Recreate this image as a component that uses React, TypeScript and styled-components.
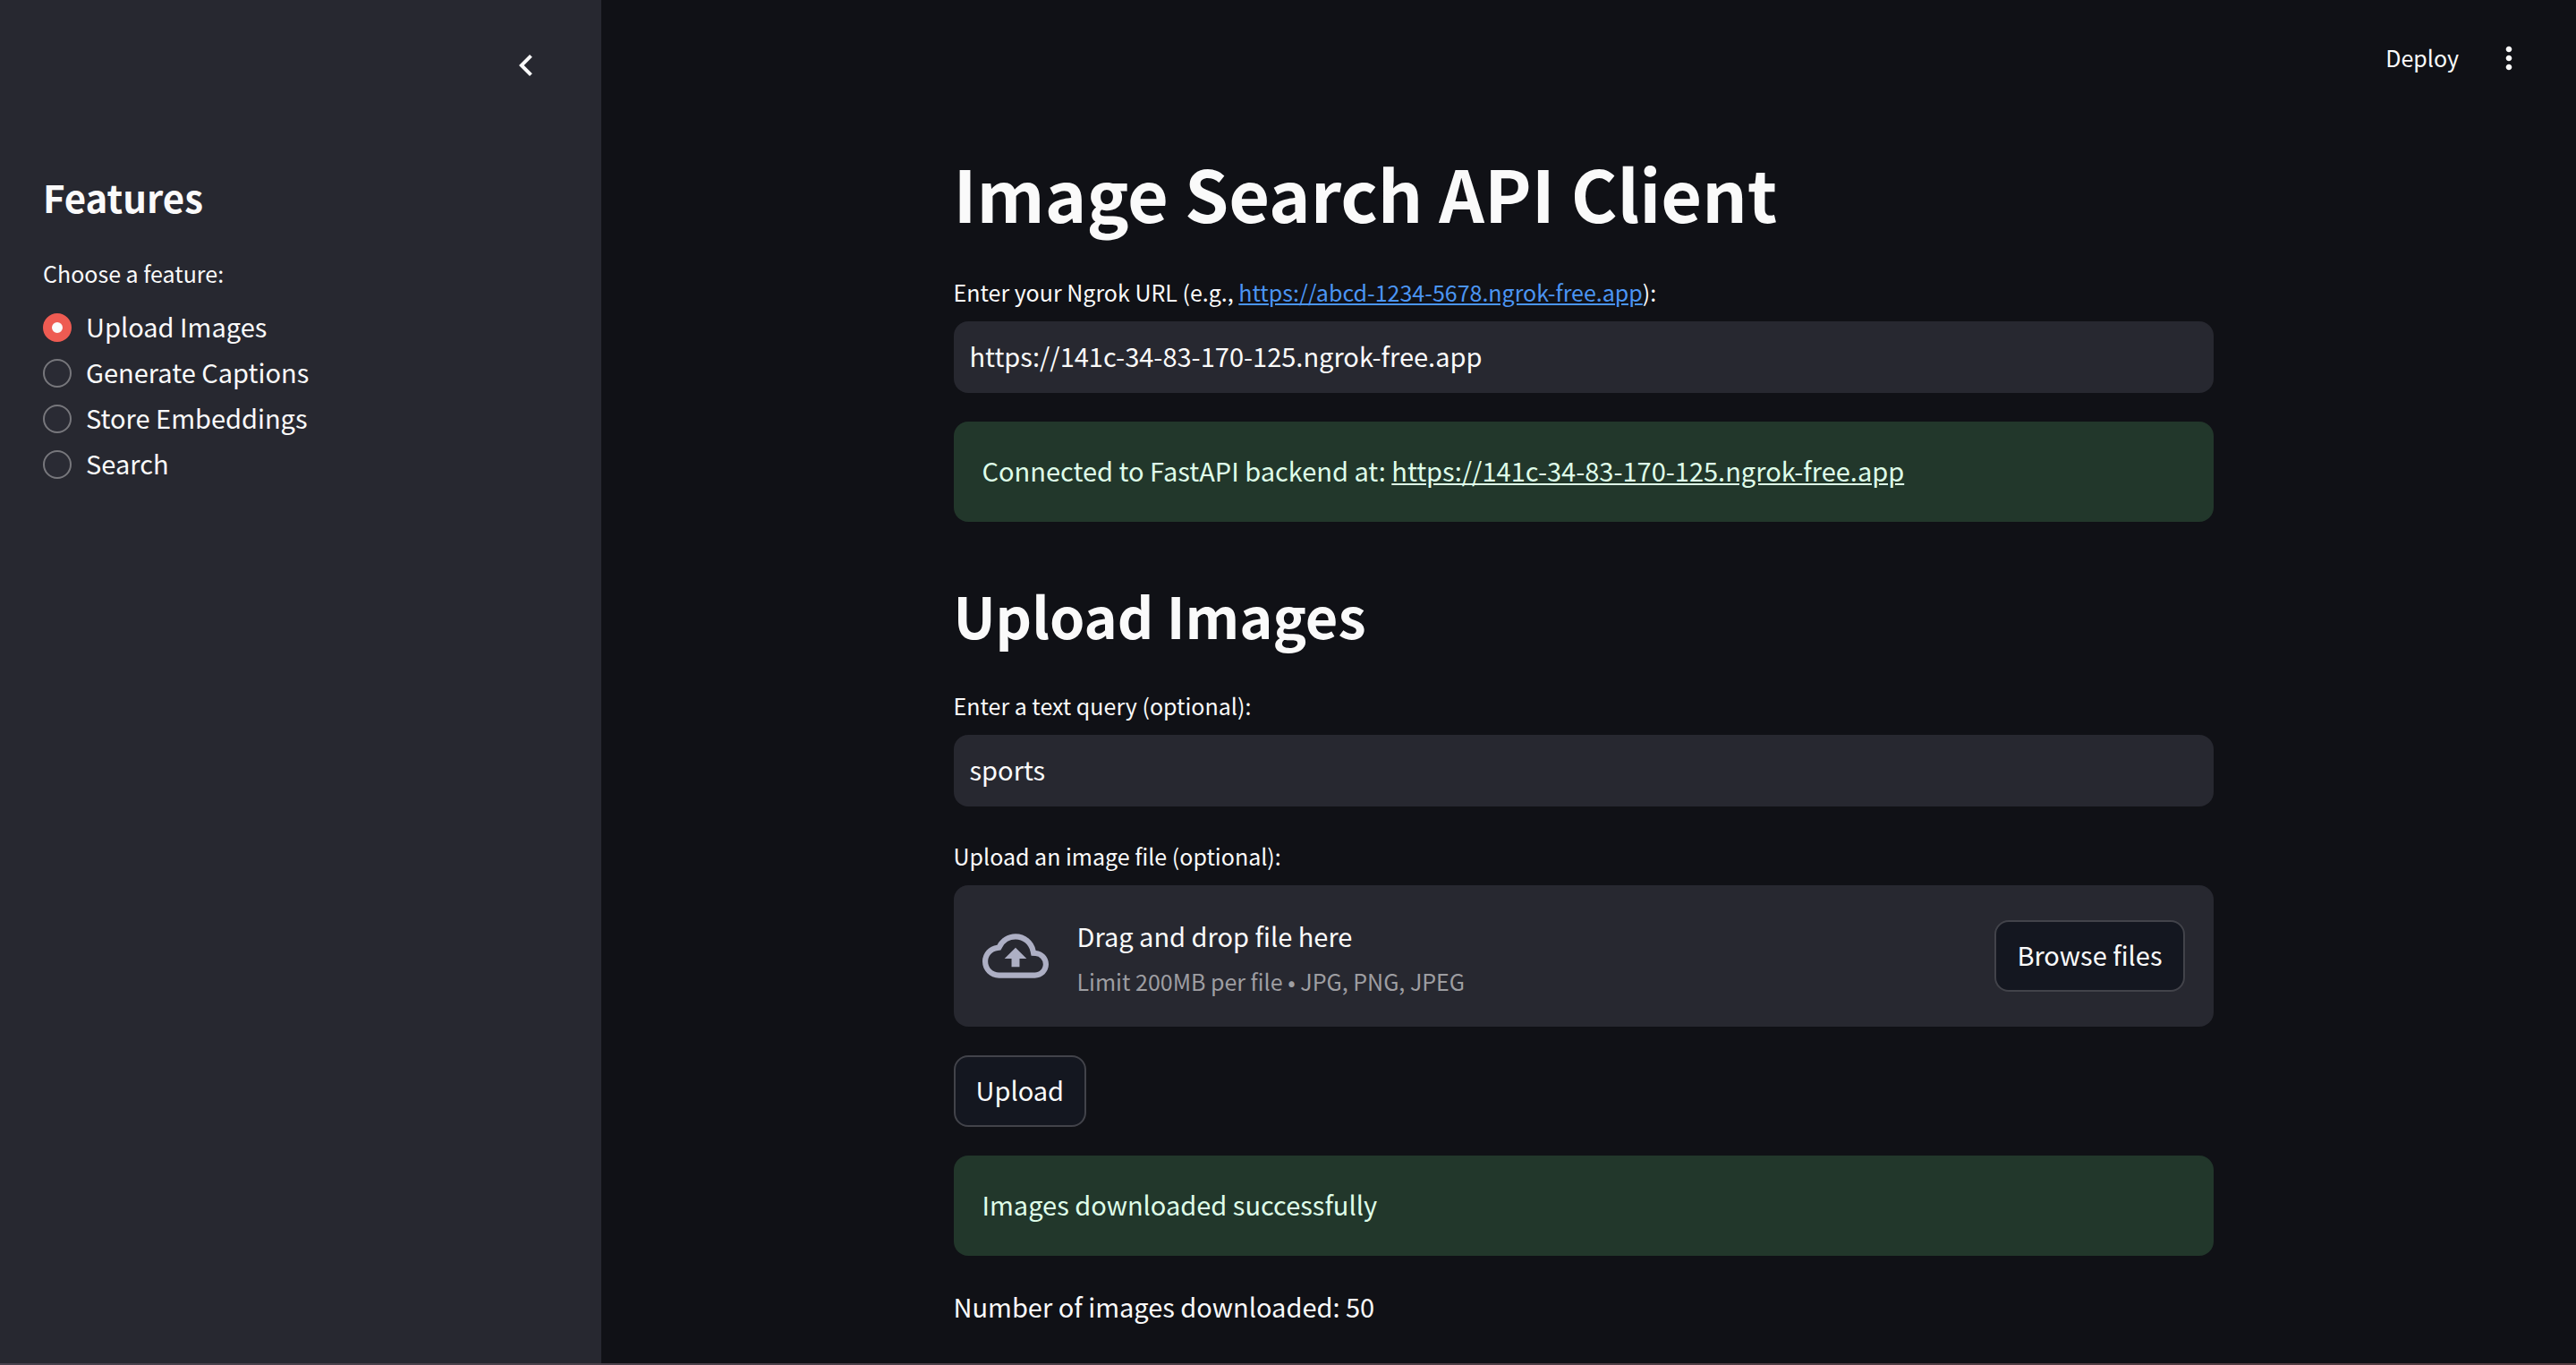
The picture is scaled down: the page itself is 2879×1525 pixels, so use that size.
import React, { useRef, useState } from "react";
import styled, { createGlobalStyle, css } from "styled-components";
import { MdChevronLeft, MdMoreVert, MdOutlineCloudUpload } from "react-icons/md";

const color = {
  page: "#101116",
  panel: "#272830",
  button: "#141720",
  text: "#fafafa",
  muted: "#9e9ea2",
  border: "#42434a",
  link: "#4b95f3",
  primary: "#ee5b52",
  successBg: "#22372b",
  successText: "#dffde9",
};

const GlobalStyle = createGlobalStyle`
  *, *::before, *::after { box-sizing: border-box; }
  body {
    margin: 0;
    background: ${color.page};
    color: ${color.text};
    font-family: "Noto Sans CJK JP", "Noto Sans", sans-serif;
    font-size: 29px;
    line-height: 48px;
  }
  button, input { font: inherit; color: inherit; }
  h1, h2, p, fieldset { margin: 0; padding: 0; border: 0; min-width: 0; }
`;

const Shell = styled.div`
  min-height: 100vh;
  display: flex;
  flex-direction: column;
`;

const Columns = styled.div`
  flex: 1;
  display: flex;
`;

const BottomEdge = styled.div`
  height: 2px;
  background: linear-gradient(90deg, #48424d, #553d42);
`;

const Sidebar = styled.aside`
  flex: 0 0 672px;
  background: ${color.panel};
  padding: 49px 48px 48px;
`;

const SidebarTop = styled.div`
  display: flex;
  justify-content: flex-end;
  padding: 0 12px;
  margin-bottom: 89px;
`;

const IconButton = styled.button`
  display: flex;
  align-items: center;
  justify-content: center;
  width: 48px;
  height: 48px;
  padding: 0;
  border: 0;
  background: none;
  cursor: pointer;
`;

const SidebarTitle = styled.h2`
  font-size: 42px;
  font-weight: 600;
  line-height: 68px;
  margin-bottom: 28px;
`;

const smallText = css`
  font-size: 25px;
  line-height: 46px;
`;

const RadioGroup = styled.fieldset`
  display: flex;
  flex-direction: column;
`;

const Legend = styled.legend`
  ${smallText}
  padding: 0;
  margin-bottom: 12px;
`;

const RadioRow = styled.label`
  display: flex;
  align-items: center;
  gap: 16px;
  height: 51px;
  cursor: pointer;

  span { padding-bottom: 4px; }
`;

const Radio = styled.input`
  appearance: none;
  width: 32px;
  height: 32px;
  margin: 0;
  border: 2px solid #77777c;
  border-radius: 50%;
  background: #2a2b34;

  &:checked {
    border: 10px solid ${color.primary};
    background: ${color.text};
  }
`;

const Main = styled.main`
  flex: 1;
  min-width: 0;
  display: flex;
  flex-direction: column;
`;

const Toolbar = styled.header`
  display: flex;
  align-items: center;
  justify-content: flex-end;
  gap: 32px;
  height: 130px;
  padding-right: 51px;
`;

const DeployButton = styled.button`
  ${smallText}
  padding: 0 0 2px;
  border: 0;
  background: none;
  cursor: pointer;
`;

const Scroller = styled.div`
  padding: 28px 12px 40px 0;
`;

const Content = styled.div`
  display: flex;
  flex-direction: column;
  gap: 32px;
  width: 100%;
  max-width: 1408px;
  margin: 0 auto;
`;

const Title = styled.h1`
  font-size: 79px;
  font-weight: 700;
  line-height: 113px;
`;

const SectionTitle = styled.h2`
  font-size: 63px;
  font-weight: 600;
  line-height: 92px;
  padding-top: 26px;
`;

const Field = styled.div`
  display: flex;
  flex-direction: column;
  gap: 10px;
`;

const FieldLabel = styled.label`
  ${smallText}
`;

const Link = styled.a<{ $inherit?: boolean }>`
  color: ${(p) => (p.$inherit ? "inherit" : color.link)};
  text-decoration: underline;
`;

const TextInput = styled.input`
  width: 100%;
  height: 80px;
  padding: 0 18px 4px;
  border: 0;
  border-radius: 16px;
  background: ${color.panel};
  outline: none;
`;

const Alert = styled.div`
  padding: 30px 32px 34px;
  border-radius: 16px;
  background: ${color.successBg};
  color: ${color.successText};
`;

const Dropzone = styled.section`
  display: flex;
  align-items: center;
  gap: 32px;
  min-height: 158px;
  padding: 24px 32px;
  border-radius: 16px;
  background: ${color.panel};

  svg { color: #adafc4; flex: none; }
`;

const DropText = styled.div`
  flex: 1;
  display: flex;
  flex-direction: column;
  gap: 4px;
  padding-top: 4px;
`;

const DropHint = styled.small`
  ${smallText}
  color: ${color.muted};
`;

const Button = styled.button<{ $start?: boolean }>`
  align-self: ${(p) => (p.$start ? "flex-start" : "center")};
  height: 80px;
  padding: 0 23px 4px;
  border: 2px solid ${color.border};
  border-radius: 16px;
  background: ${color.button};
  cursor: pointer;
`;

const features = ["Upload Images", "Generate Captions", "Store Embeddings", "Search"];

export default function App() {
  const [feature, setFeature] = useState(features[0]);
  const [url, setUrl] = useState("https://141c-34-83-170-125.ngrok-free.app");
  const [query, setQuery] = useState("sports");
  const fileRef = useRef<HTMLInputElement>(null);

  return (
    <>
      <GlobalStyle />
      <Shell>
        <Columns>
          <Sidebar>
            <SidebarTop>
              <IconButton type="button" aria-label="Collapse sidebar">
                <MdChevronLeft size={48} />
              </IconButton>
            </SidebarTop>
            <SidebarTitle>Features</SidebarTitle>
            <RadioGroup>
              <Legend>Choose a feature:</Legend>
              {features.map((name) => (
                <RadioRow key={name}>
                  <Radio
                    type="radio"
                    name="feature"
                    checked={feature === name}
                    onChange={() => setFeature(name)}
                  />
                  <span>{name}</span>
                </RadioRow>
              ))}
            </RadioGroup>
          </Sidebar>
          <Main>
            <Toolbar>
              <DeployButton type="button">Deploy</DeployButton>
              <IconButton type="button" aria-label="Main menu">
                <MdMoreVert size={40} />
              </IconButton>
            </Toolbar>
            <Scroller>
              <Content>
                <Title>Image Search API Client</Title>
                <Field>
                  <FieldLabel htmlFor="url">
                    Enter your Ngrok URL (e.g.,{" "}
                    <Link href="https://abcd-1234-5678.ngrok-free.app">
                      https://abcd-1234-5678.ngrok-free.app
                    </Link>
                    ):
                  </FieldLabel>
                  <TextInput id="url" type="text" value={url} onChange={(e) => setUrl(e.target.value)} />
                </Field>
                <Alert role="status">
                  Connected to FastAPI backend at:{" "}
                  <Link $inherit href="https://141c-34-83-170-125.ngrok-free.app">
                    https://141c-34-83-170-125.ngrok-free.app
                  </Link>
                </Alert>
                <SectionTitle>Upload Images</SectionTitle>
                <Field>
                  <FieldLabel htmlFor="query">Enter a text query (optional):</FieldLabel>
                  <TextInput id="query" type="text" value={query} onChange={(e) => setQuery(e.target.value)} />
                </Field>
                <Field>
                  <FieldLabel htmlFor="file">Upload an image file (optional):</FieldLabel>
                  <Dropzone>
                    <MdOutlineCloudUpload size={74} />
                    <DropText>
                      <span>Drag and drop file here</span>
                      <DropHint>Limit 200MB per file • JPG, PNG, JPEG</DropHint>
                    </DropText>
                    <input ref={fileRef} id="file" type="file" accept=".jpg,.png,.jpeg" hidden />
                    <Button type="button" onClick={() => fileRef.current?.click()}>
                      Browse files
                    </Button>
                  </Dropzone>
                </Field>
                <Button $start type="button">Upload</Button>
                <Alert role="status">Images downloaded successfully</Alert>
                <p>Number of images downloaded: 50</p>
              </Content>
            </Scroller>
          </Main>
        </Columns>
        <BottomEdge />
      </Shell>
    </>
  );
}
